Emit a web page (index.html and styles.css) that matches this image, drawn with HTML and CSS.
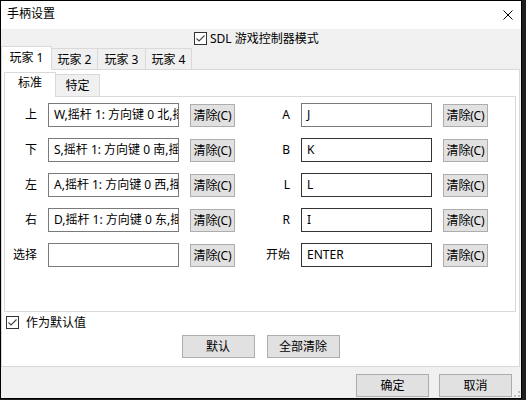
FILE: index.html
```
<!DOCTYPE html>
<html lang="zh-CN">
<head>
<meta charset="utf-8">
<title>手柄设置</title>
<link rel="stylesheet" href="styles.css">
</head>
<body>
<div class="window">
  <div class="titlebar">
    <span class="title">手柄设置</span>
    <svg class="close" width="10" height="10" viewBox="0 0 10 10"><path d="M0.5 0.5 L9.5 9.5 M9.5 0.5 L0.5 9.5" stroke="#000" stroke-width="1" fill="none"/></svg>
  </div>
  <div class="client">
    <div class="sdl-row">
      <span class="check"><svg width="13" height="13" viewBox="0 0 13 13"><rect x="0.5" y="0.5" width="12" height="12" fill="#fff" stroke="#333"/><path d="M2.5 6.5 L5 9 L10.5 3.5" stroke="#444" stroke-width="1.1" fill="none"/></svg></span>
      <span class="check-label">SDL 游戏控制器模式</span>
    </div>
    <div class="tabs outer-tabs">
      <div class="tab active">玩家 1</div>
      <div class="tab w47">玩家 2</div>
      <div class="tab w49">玩家 3</div>
      <div class="tab w47">玩家 4</div>
    </div>
    <div class="outer-panel">
      <div class="tabs inner-tabs">
        <div class="tab active">标准</div>
        <div class="tab">特定</div>
      </div>
      <div class="inner-panel">
        <div class="grid">
          <span class="lbl">上</span>
          <div class="field">W,摇杆 1: 方向键 0 北,摇杆 1: 轴 1-</div>
          <button class="btn clr">清除(C)</button>
          <span class="lbl">A</span>
          <div class="field">J</div>
          <button class="btn clr">清除(C)</button>

          <span class="lbl">下</span>
          <div class="field">S,摇杆 1: 方向键 0 南,摇杆 1: 轴 1+</div>
          <button class="btn clr">清除(C)</button>
          <span class="lbl">B</span>
          <div class="field dark">K</div>
          <button class="btn clr">清除(C)</button>

          <span class="lbl">左</span>
          <div class="field">A,摇杆 1: 方向键 0 西,摇杆 1: 轴 0-</div>
          <button class="btn clr">清除(C)</button>
          <span class="lbl">L</span>
          <div class="field dark">L</div>
          <button class="btn clr">清除(C)</button>

          <span class="lbl">右</span>
          <div class="field">D,摇杆 1: 方向键 0 东,摇杆 1: 轴 0+</div>
          <button class="btn clr">清除(C)</button>
          <span class="lbl">R</span>
          <div class="field dark">I</div>
          <button class="btn clr">清除(C)</button>

          <span class="lbl">选择</span>
          <div class="field"></div>
          <button class="btn clr">清除(C)</button>
          <span class="lbl">开始</span>
          <div class="field dark">ENTER</div>
          <button class="btn clr">清除(C)</button>
        </div>
      </div>
      <div class="default-row">
        <span class="check"><svg width="13" height="13" viewBox="0 0 13 13"><rect x="0.5" y="0.5" width="12" height="12" fill="#fff" stroke="#333"/><path d="M2.5 6.5 L5 9 L10.5 3.5" stroke="#444" stroke-width="1.1" fill="none"/></svg></span>
        <span class="check-label">作为默认值</span>
      </div>
      <div class="btn-row">
        <button class="btn big">默认</button>
        <button class="btn big">全部清除</button>
      </div>
    </div>
    <div class="footer">
      <button class="btn big">确定</button>
      <button class="btn big">取消</button>
      <svg class="grip" width="8" height="7" viewBox="0 0 8 7"><rect x="5" y="0" width="2" height="2" fill="#bdbdbd"/><rect x="1" y="4" width="2" height="2" fill="#bdbdbd"/><rect x="5" y="4" width="2" height="2" fill="#bdbdbd"/></svg>
    </div>
  </div>
</div>
</body>
</html>
```
FILE: styles.css
```
* { box-sizing: border-box; }
html, body { margin: 0; padding: 0; }
body {
  background: #1e1e1e;
  width: 526px;
  height: 400px;
  overflow: hidden;
  font-family: "Noto Sans", "Noto Sans CJK SC", sans-serif;
  font-size: 12px;
  color: #000;
}
.window {
  width: 522px;
  height: 399px;
  border: 1px solid #000;
  background: #f0f0f0;
  display: flex;
  flex-direction: column;
}
.titlebar {
  height: 28px;
  background: #fff;
  display: flex;
  align-items: center;
  padding-left: 6px;
  padding-right: 8px;
}
.title { line-height: 14px; margin-top: -2px; }
.close { margin-left: auto; margin-top: -1px; }
.client {
  flex: 1;
  display: flex;
  flex-direction: column;
  position: relative;
}
.sdl-row {
  height: 17px;
  display: flex;
  align-items: flex-start;
  padding-top: 3px;
  padding-left: 193px;
}
.check { display: block; width: 13px; height: 13px; }
.check svg { display: block; }
.check-label { line-height: 13px; margin-left: 3px; }
.tabs {
  display: flex;
  align-items: flex-end;
  margin-bottom: -1px;
}
.tab {
  background: #f0f0f0;
  border: 1px solid #d9d9d9;
  border-bottom: none;
  text-align: center;
  white-space: nowrap;
}
.tab.active {
  background: #fff;
  position: relative;
}
.tab + .tab { margin-left: -1px; }
.outer-tabs { height: 24px; }
.outer-tabs .tab { height: 22px; line-height: 21px; width: 46px; }
.outer-tabs .tab.w47 { width: 47px; }
.outer-tabs .tab.w49 { width: 49px; }
.outer-tabs .tab.active { height: 24px; width: 51px; line-height: 22px; }
.outer-panel {
  width: 519px;
  height: 298px;
  background: #fff;
  border: 1px solid #d9d9d9;
  padding: 2px 0 0 2px;
  display: flex;
  flex-direction: column;
}
.inner-tabs { height: 25px; }
.inner-tabs .tab { height: 23px; line-height: 22px; width: 45px; }
.inner-tabs .tab.active { height: 25px; width: 52px; line-height: 20px; }
.inner-panel {
  width: 512px;
  height: 216px;
  border: 1px solid #d9d9d9;
  background: #fff;
  padding-top: 6px;
}
.grid {
  display: grid;
  grid-template-columns: 32px 131px 45px 44px 131px 45px;
  grid-auto-rows: 24px;
  column-gap: 11px;
  row-gap: 11px;
  align-items: center;
}
.lbl { text-align: right; line-height: 14px; white-space: nowrap; }
.field {
  height: 24px;
  border: 1px solid #7a7a7a;
  background: #fff;
  line-height: 21px;
  padding-left: 5px;
  white-space: nowrap;
  overflow: hidden;
}
.field.dark { border-color: #333; }
.btn {
  font-family: inherit;
  font-size: 12px;
  color: #000;
  background: #e1e1e1;
  border: 1px solid #adadad;
  padding: 0;
  margin: 0;
  height: 23px;
  line-height: 20px;
  white-space: nowrap;
  overflow: hidden;
}
.btn.clr { width: 45px; align-self: end; letter-spacing: -0.2px; }
.btn.big { width: 73px; }
.default-row {
  display: flex;
  align-items: center;
  margin-top: 4px;
  padding-left: 2px;
  height: 13px;
}
.default-row .check-label { margin-left: 7px; }
.btn-row {
  display: flex;
  justify-content: center;
  gap: 12px;
  margin-top: 6px;
  margin-left: -2px;
}
.footer {
  flex: 1;
  display: flex;
  justify-content: flex-end;
  align-items: flex-start;
  gap: 10px;
  padding-top: 7px;
  padding-right: 9px;
}
.grip {
  position: absolute;
  right: 0;
  bottom: 0;
}
```
